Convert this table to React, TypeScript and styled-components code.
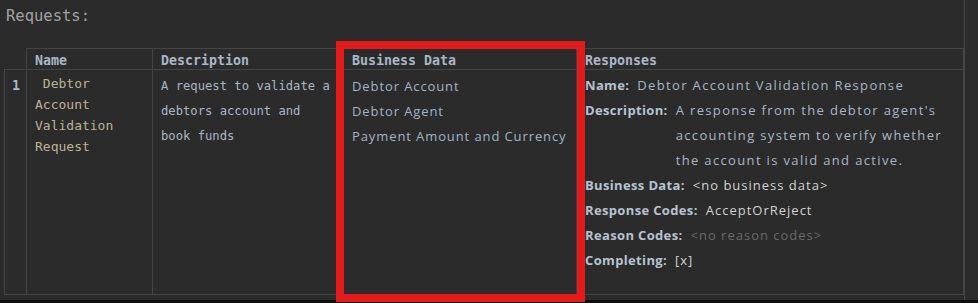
import styled, { createGlobalStyle } from "styled-components";

const Global = createGlobalStyle`
  body {
    margin: 0;
    background: #2b2b2b;
  }
`;

const Mono = `"DejaVu Sans Mono", "Liberation Mono", monospace`;
const Sans = `"Open Sans", "Noto Sans", sans-serif`;

const Page = styled.div`
  display: flex;
  flex-direction: column;
  width: 978px;
  height: 303px;
  background: #2b2b2b;
`;

const Main = styled.div`
  display: flex;
  height: 300px;
`;

const Panel = styled.div`
  width: 965px;
  border-right: 1px solid #454545;
  padding-left: 4px;
  box-sizing: border-box;
`;

const Filler = styled.div`
  flex: 1;
`;

const Strip = styled.div`
  height: 3px;
  background: #0e0e0e;
`;

const Heading = styled.h2`
  margin: 0 0 22px;
  padding: 6px 0 0 2px;
  height: 20px;
  line-height: 20px;
  font-family: ${Mono};
  font-size: 15.5px;
  font-weight: normal;
  color: #a2a2a2;
`;

const TableWrap = styled.div`
  position: relative;
  width: 960px;
`;

const Table = styled.table`
  width: 960px;
  border-collapse: collapse;
  table-layout: fixed;
`;

const Head = styled.th<{ $blank?: boolean }>`
  height: 16px;
  padding: 4px 8px 0;
  line-height: 16px;
  text-align: left;
  vertical-align: top;
  font-family: ${Mono};
  font-size: 13.3px;
  font-weight: bold;
  color: #a9b7c6;
  border: ${(p) => (p.$blank ? "none" : "1px solid #444444")};
`;

const Cell = styled.td<{ $lh?: number; $pt?: number }>`
  height: 225px;
  box-sizing: border-box;
  padding: ${(p) => p.$pt ?? 4}px 8px 0;
  vertical-align: top;
  line-height: ${(p) => p.$lh ?? 25}px;
  border: 1px solid #444444;
`;

const RowNum = styled(Cell)`
  padding: 3px 0 0 7px;
  font-family: ${Mono};
  font-size: 13.3px;
  font-weight: bold;
  color: #a9b7c6;
`;

const NameText = styled.div`
  font-family: ${Mono};
  font-size: 13px;
  color: #bfb293;
`;

const DescText = styled.div`
  font-family: ${Mono};
  font-size: 12.2px;
  color: #a9b7c6;
`;

const DataItem = styled.div`
  font-family: ${Sans};
  font-size: 13px;
  letter-spacing: 0.9px;
  white-space: nowrap;
  color: #a3b4c6;
`;

const Field = styled.div`
  display: flex;
  gap: 8px;
  font-family: ${Sans};
  font-size: 13px;
  line-height: 25px;
`;

const Label = styled.span`
  flex: none;
  font-weight: bold;
  letter-spacing: 0.35px;
  color: #b6c3d1;
`;

const Value = styled.span<{ $tone?: "blue" | "light" | "muted" }>`
  flex: 1;
  letter-spacing: ${(p) => (p.$tone === "blue" ? "1.35px" : "1px")};
  color: ${(p) =>
    p.$tone === "muted" ? "#6a6a6a" : p.$tone === "light" ? "#d2d2d2" : "#a9b7c6"};
`;

const Highlight = styled.div`
  position: absolute;
  left: 332px;
  top: -7px;
  width: 249px;
  height: 261px;
  box-sizing: border-box;
  border: 8px solid #e41b1b;
  pointer-events: none;
`;

type Resp = { label: string; value: string; tone: "blue" | "light" | "muted" };

const responses: Resp[] = [
  { label: "Name:", value: "Debtor Account Validation Response", tone: "blue" },
  {
    label: "Description:",
    value:
      "A response from the debtor agent's accounting system to verify whether the account is valid and active.",
    tone: "blue",
  },
  { label: "Business Data:", value: "<no business data>", tone: "light" },
  { label: "Response Codes:", value: "AcceptOrReject", tone: "light" },
  { label: "Reason Codes:", value: "<no reason codes>", tone: "muted" },
  { label: "Completing:", value: "[x]", tone: "light" },
];

const businessData = ["Debtor Account", "Debtor Agent", "Payment Amount and Currency"];

export default function App() {
  return (
    <Page>
      <Global />
      <Main>
        <Panel>
          <Heading>Requests:</Heading>
          <TableWrap>
            <Table>
              <colgroup>
                <col style={{ width: 22 }} />
                <col style={{ width: 126 }} />
                <col style={{ width: 191 }} />
                <col style={{ width: 233 }} />
                <col />
              </colgroup>
              <thead>
                <tr>
                  <Head $blank />
                  <Head>Name</Head>
                  <Head>Description</Head>
                  <Head>Business Data</Head>
                  <Head>Responses</Head>
                </tr>
              </thead>
              <tbody>
                <tr>
                  <RowNum>1</RowNum>
                  <Cell $lh={21} $pt={3}>
                    <NameText>{"\u00a0"}Debtor Account Validation Request</NameText>
                  </Cell>
                  <Cell>
                    <DescText>A request to validate a debtors account and book funds</DescText>
                  </Cell>
                  <Cell>
                    {businessData.map((d) => (
                      <DataItem key={d}>{d}</DataItem>
                    ))}
                  </Cell>
                  <Cell $pt={3}>
                    {responses.map((r) => (
                      <Field key={r.label}>
                        <Label>{r.label}</Label>
                        <Value $tone={r.tone}>{r.value}</Value>
                      </Field>
                    ))}
                  </Cell>
                </tr>
              </tbody>
            </Table>
            <Highlight />
          </TableWrap>
        </Panel>
        <Filler />
      </Main>
      <Strip />
    </Page>
  );
}
